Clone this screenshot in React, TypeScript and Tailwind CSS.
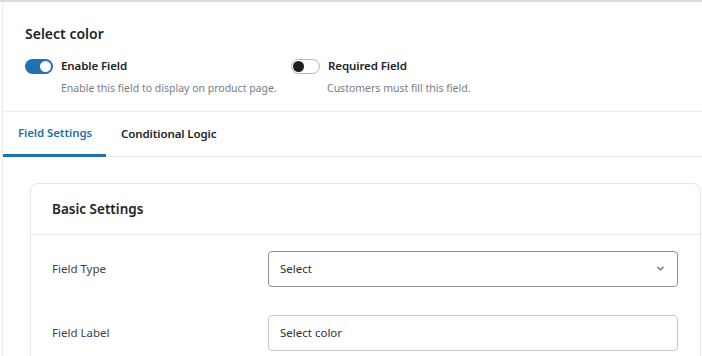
import { ChevronDown } from "lucide-react";

function Toggle({ on }: { on: boolean }) {
  return on ? (
    <span className="relative inline-block w-[28px] h-[15px] rounded-full bg-[#2271b1] shrink-0">
      <span className="absolute right-[2px] top-[2px] w-[11px] h-[11px] rounded-full bg-white" />
    </span>
  ) : (
    <span className="relative inline-block w-[29px] h-[15px] rounded-full border border-[#b5b5b5] bg-white shrink-0">
      <span className="absolute left-[1px] top-[1px] w-[11px] h-[11px] rounded-full bg-[#1e1e1e]" />
    </span>
  );
}

function Switch({ on, title, desc }: { on: boolean; title: string; desc: string }) {
  return (
    <div className="flex flex-col">
      <div className="flex items-center gap-[8px] h-[16px]">
        <Toggle on={on} />
        <span className="text-[11.5px] font-semibold text-[#1d2327] tracking-[-0.1px]">{title}</span>
      </div>
      <p className="mt-[7px] ml-[36px] text-[10.5px] text-[#787c82] whitespace-nowrap">{desc}</p>
    </div>
  );
}

export default function App() {
  return (
    <div
      className="w-[702px] h-[356px] overflow-hidden bg-white border-t-2 border-[#dcdcde]"
      style={{ fontFamily: '"Noto Sans", "Open Sans", sans-serif' }}
    >
      <div className="ml-[2px] h-full border-l border-[#ececec]">
        <div className="pl-[22px] pt-[22px] pb-[14px] border-b border-[#ececec]">
          <h2 className="text-[14px] font-semibold text-[#1d2327] leading-[20px]">Select color</h2>
          <div className="mt-[14px] flex gap-[11px]">
            <div className="w-[255px]">
              <Switch on title="Enable Field" desc="Enable this field to display on product page." />
            </div>
            <Switch on={false} title="Required Field" desc="Customers must fill this field." />
          </div>
        </div>

        <div className="flex h-[45px] border-b border-[#ececec] text-[11.5px] font-semibold tracking-[-0.1px]">
          <div className="w-[103px] flex items-center pl-[15px] text-[#2271b1] border-b-[3px] border-[#2271b1] -mb-px">
            Field Settings
          </div>
          <div className="flex items-center pl-[15px] text-[#1d2327]">Conditional Logic</div>
        </div>

        <div className="pl-[27px] pr-px pt-[26px]">
          <div className="border border-[#e6e6e6] rounded-[8px] pb-[40px]">
            <div className="h-[51px] flex items-center pl-[21px] border-b border-[#ececec]">
              <h3 className="text-[13.5px] font-semibold text-[#1d2327]">Basic Settings</h3>
            </div>
            <div className="pl-[21px] pt-[16px] flex flex-col gap-[28px]">
              <div className="flex items-center">
                <label className="w-[216px] text-[11.5px] text-[#3c434a]">Field Type</label>
                <div className="w-[410px] h-[36px] flex items-center justify-between px-[11px] border border-[#8c8f94] rounded-[4px] text-[11.5px] text-[#2c3338]">
                  <span>Select</span>
                  <ChevronDown size={11} strokeWidth={2.5} className="text-[#50575e]" />
                </div>
              </div>
              <div className="flex items-center">
                <label className="w-[216px] text-[11.5px] text-[#3c434a]">Field Label</label>
                <div className="w-[410px] h-[36px] flex items-center px-[11px] border border-[#c9c9c9] rounded-[4px] text-[11.5px] text-[#2c3338]">
                  Select color
                </div>
              </div>
            </div>
          </div>
        </div>
      </div>
    </div>
  );
}
